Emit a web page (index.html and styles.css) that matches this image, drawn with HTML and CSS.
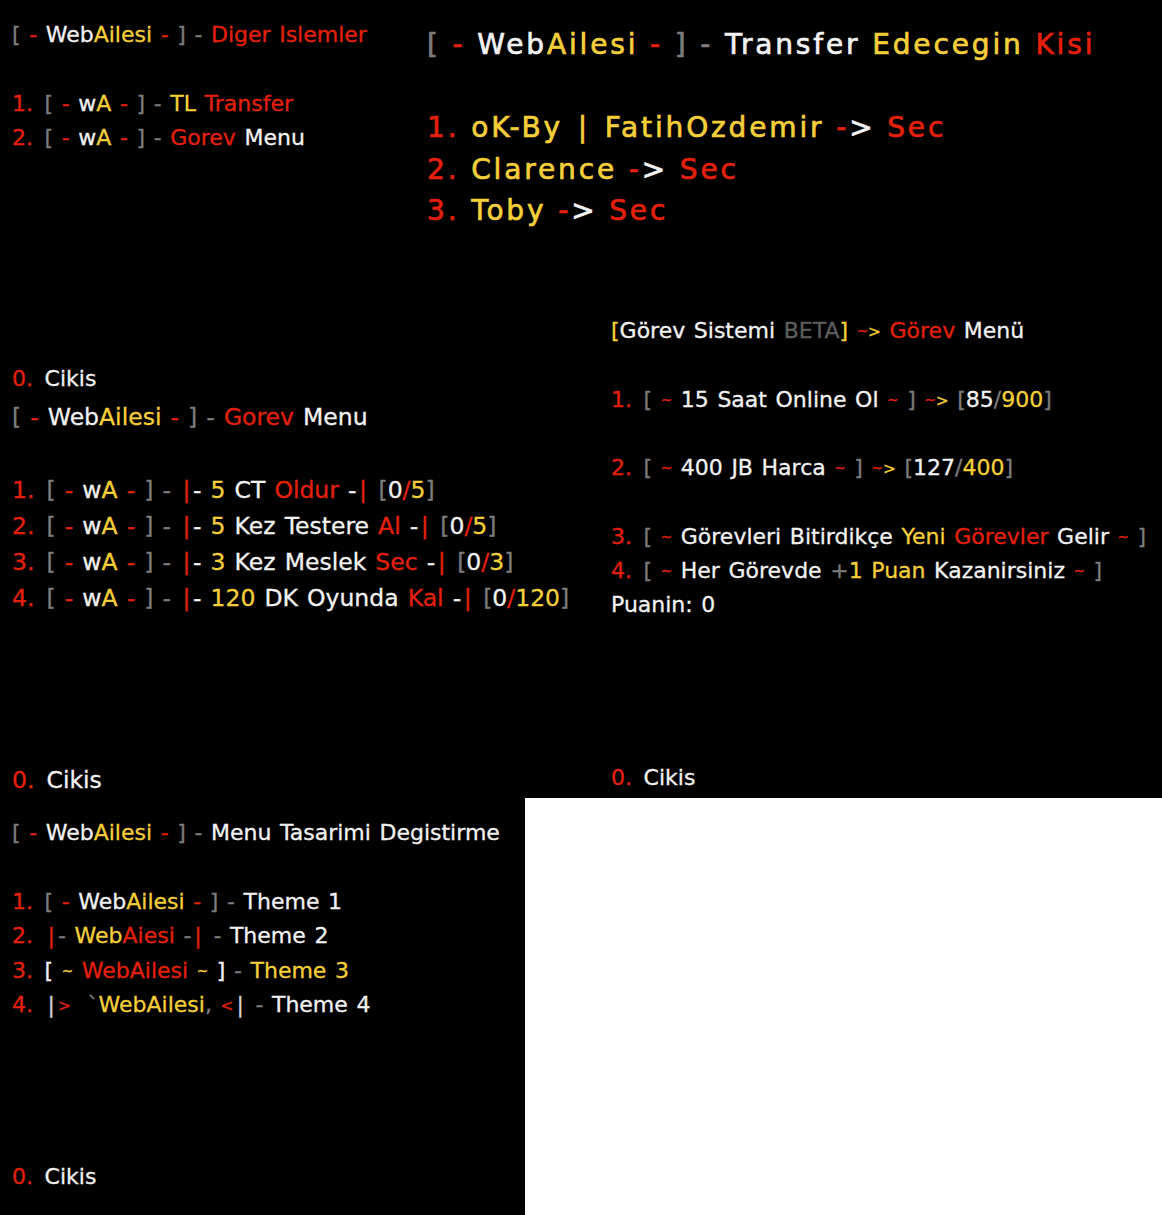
FILE: index.html
```html
<!DOCTYPE html>
<html lang="tr">
<head>
<meta charset="utf-8">
<title>WebAilesi Menus</title>
<link rel="stylesheet" href="styles.css">
</head>
<body>
<main class="collage">

  <section class="panel p-a">
    <div class="ln"><span class="g">[</span> <span class="r">-</span> Web<span class="y">Ailesi</span> <span class="r">-</span> <span class="g">]</span> <span class="g">-</span> <span class="r">Diger Islemler</span></div>
    <div class="ln sp"><span class="r n">1.</span> <span class="g">[</span> <span class="r">-</span> w<span class="y">A</span> <span class="r">-</span> <span class="g">]</span> <span class="g">-</span> <span class="y">TL</span> <span class="r">Transfer</span></div>
    <div class="ln"><span class="r n">2.</span> <span class="g">[</span> <span class="r">-</span> w<span class="y">A</span> <span class="r">-</span> <span class="g">]</span> <span class="g">-</span> <span class="r">Gorev</span> Menu</div>
    <div class="ln foot"><span class="r n">0.</span> Cikis</div>
  </section>

  <section class="panel p-b">
    <div class="ln"><span class="g">[</span> <span class="r">-</span> Web<span class="y">Ailesi</span> <span class="r">-</span> <span class="g">]</span> <span class="g">-</span> Transfer <span class="y">Edecegin</span> <span class="r">Kisi</span></div>
    <div class="ln sp"><span class="r">1.</span> <span class="y">oK-By <span class="b">|</span> FatihOzdemir</span> <span class="r">-</span><span class="gt">&gt;</span> <span class="r">Sec</span></div>
    <div class="ln"><span class="r">2.</span> <span class="y">Clarence</span> <span class="r">-</span><span class="gt">&gt;</span> <span class="r">Sec</span></div>
    <div class="ln"><span class="r">3.</span> <span class="y">Toby</span> <span class="r">-</span><span class="gt">&gt;</span> <span class="r">Sec</span></div>
  </section>

  <section class="panel p-c">
    <div class="ln"><span class="g">[</span> <span class="r">-</span> Web<span class="y">Ailesi</span> <span class="r">-</span> <span class="g">]</span> <span class="g">-</span> <span class="r">Gorev</span> Menu</div>
    <div class="ln sp"><span class="r n">1.</span> <span class="g">[</span> <span class="r">-</span> w<span class="y">A</span> <span class="r">-</span> <span class="g">]</span> <span class="g">-</span> <span class="r b">|</span>- <span class="y">5</span> CT <span class="r">Oldur</span> -<span class="r b">|</span> <span class="g">[</span>0<span class="r">/</span><span class="y">5</span><span class="g">]</span></div>
    <div class="ln"><span class="r n">2.</span> <span class="g">[</span> <span class="r">-</span> w<span class="y">A</span> <span class="r">-</span> <span class="g">]</span> <span class="g">-</span> <span class="r b">|</span>- <span class="y">5</span> Kez Testere <span class="r">Al</span> -<span class="r b">|</span> <span class="g">[</span>0<span class="r">/</span><span class="y">5</span><span class="g">]</span></div>
    <div class="ln"><span class="r n">3.</span> <span class="g">[</span> <span class="r">-</span> w<span class="y">A</span> <span class="r">-</span> <span class="g">]</span> <span class="g">-</span> <span class="r b">|</span>- <span class="y">3</span> Kez Meslek <span class="r">Sec</span> -<span class="r b">|</span> <span class="g">[</span>0<span class="r">/</span><span class="y">3</span><span class="g">]</span></div>
    <div class="ln"><span class="r n">4.</span> <span class="g">[</span> <span class="r">-</span> w<span class="y">A</span> <span class="r">-</span> <span class="g">]</span> <span class="g">-</span> <span class="r b">|</span>- <span class="y">120</span> DK Oyunda <span class="r">Kal</span> -<span class="r b">|</span> <span class="g">[</span>0<span class="r">/</span><span class="y">120</span><span class="g">]</span></div>
    <div class="ln foot"><span class="r n">0.</span> Cikis</div>
  </section>

  <section class="panel p-d">
    <div class="ln"><span class="y">[</span>Görev Sistemi <span class="d">BETA</span><span class="y">]</span> <span class="r t">~</span><span class="y gt">&gt;</span> <span class="r">Görev</span> Menü</div>
    <div class="ln sp"><span class="r n">1.</span> <span class="g">[</span> <span class="r t">~</span> 15 Saat Online Ol <span class="r t">~</span> <span class="g">]</span> <span class="r t">~</span><span class="y gt">&gt;</span> <span class="g">[</span>85<span class="g">/</span><span class="y">900</span><span class="g">]</span></div>
    <div class="ln sp"><span class="r n">2.</span> <span class="g">[</span> <span class="r t">~</span> 400 JB Harca <span class="r t">~</span> <span class="g">]</span> <span class="r t">~</span><span class="y gt">&gt;</span> <span class="g">[</span>127<span class="g">/</span><span class="y">400</span><span class="g">]</span></div>
    <div class="ln sp"><span class="r n">3.</span> <span class="g">[</span> <span class="r t">~</span> Görevleri Bitirdikçe <span class="y">Yeni</span> <span class="r">Görevler</span> Gelir <span class="r t">~</span> <span class="g">]</span></div>
    <div class="ln"><span class="r n">4.</span> <span class="g">[</span> <span class="r t">~</span> Her Görevde <span class="g">+</span><span class="y">1 Puan</span> Kazanirsiniz <span class="r t">~</span> <span class="g">]</span></div>
    <div class="ln">Puanin: 0</div>
    <div class="ln foot"><span class="r n">0.</span> Cikis</div>
  </section>

  <section class="panel p-e">
    <div class="ln"><span class="g">[</span> <span class="r">-</span> Web<span class="y">Ailesi</span> <span class="r">-</span> <span class="g">]</span> <span class="g">-</span> Menu Tasarimi Degistirme</div>
    <div class="ln sp"><span class="r n">1.</span> <span class="g">[</span> <span class="r">-</span> Web<span class="y">Ailesi</span> <span class="r">-</span> <span class="g">]</span> <span class="g">-</span> Theme 1</div>
    <div class="ln"><span class="r n">2.</span> <span class="r b">|</span><span class="g">-</span> <span class="y">Web</span><span class="r">Aiesi</span> <span class="g">-</span><span class="r b">|</span> <span class="g">-</span> Theme 2</div>
    <div class="ln"><span class="r n">3.</span> [ <span class="y t">~</span> <span class="r">WebAilesi</span> <span class="y t">~</span> ] <span class="g">-</span> <span class="y">Theme 3</span></div>
    <div class="ln"><span class="r n">4.</span> <span class="l b">|</span><span class="r gt">&gt;</span> <span class="g tick">`</span><span class="y">WebAilesi</span><span class="g">,</span> <span class="r gt">&lt;</span><span class="l b">|</span> <span class="g">-</span> Theme 4</div>
    <div class="ln foot"><span class="r n">0.</span> Cikis</div>
  </section>

  <div class="blank"></div>
</main>
</body>
</html>
```

FILE: styles.css
```css
html, body {
  margin: 0;
  padding: 0;
  background: #000;
}

.collage {
  display: grid;
  width: 1162px;
  height: 1215px;
  grid-template-columns: 410px 115px 75px 1fr;
  grid-template-rows: 300px 96px 402px 1fr;
  background: #000;
  color: #f2f2f2;
  font-family: "DejaVu Sans", "Liberation Sans", sans-serif;
  -webkit-text-stroke: 0.3px currentColor;
}

.panel {
  display: flex;
  flex-direction: column;
  min-width: 0;
  word-spacing: 1.6px;
}

.ln {
  white-space: nowrap;
  height: var(--lh);
  line-height: var(--lh);
}

.sp {
  margin-top: var(--lh);
}

.foot {
  margin-top: auto;
}

.p-a {
  grid-column: 1;
  grid-row: 1 / 3;
  --lh: 34.4px;
  font-size: 22px;
  padding: 18px 0 0 12px;
}

.p-b {
  grid-column: 2 / 5;
  grid-row: 1;
  --lh: 41.6px;
  font-size: 28px;
  letter-spacing: 2.85px;
  word-spacing: 0;
  -webkit-text-stroke: 0.7px currentColor;
  padding: 24px 0 0 17px;
}

.p-c {
  grid-column: 1 / 4;
  grid-row: 3;
  --lh: 36.3px;
  font-size: 23.5px;
  word-spacing: 1.6px;
  padding: 3px 0 0 12px;
}

.p-d {
  grid-column: 4;
  grid-row: 2 / 4;
  --lh: 34.3px;
  font-size: 22px;
  padding: 14px 0 3px 11px;
}

.p-e {
  grid-column: 1 / 3;
  grid-row: 4;
  --lh: 34.4px;
  font-size: 22px;
  padding: 18px 0 21px 12px;
}

.blank {
  grid-column: 3 / 5;
  grid-row: 4;
  background: #fff;
}

.r { color: #e4200c; }
.y { color: #f5cf3a; }
.g { color: #7c7c7c; }
.d { color: #5e5e5e; }
.l { color: #d0d0d0; }

.n {
  margin-right: 3px;
}

.b {
  padding: 0 3px;
}

.p-c .b {
  padding: 0 2.5px;
}

.t {
  font-size: 0.62em;
  vertical-align: 0.12em;
}

.gt {
  font-size: 0.7em;
  vertical-align: 0.08em;
}

.p-b .gt {
  font-size: 1em;
  vertical-align: 0;
}

.tick {
  margin-left: 8px;
}
```
